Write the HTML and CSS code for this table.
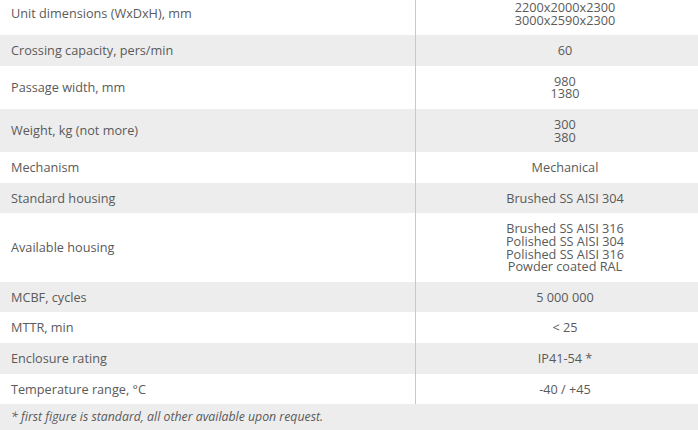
FILE: index.html
```html
<!DOCTYPE html>
<html>
<head>
<meta charset="utf-8">
<link rel="stylesheet" href="styles.css">
</head>
<body>
<div class="specs">
  <table class="spec-table">
    <tr><td class="name">Unit dimensions (WxDxH), mm</td><td class="val">2200x2000x2300<br>3000x2590x2300</td></tr>
    <tr class="alt"><td class="name">Crossing capacity, pers/min</td><td class="val">60</td></tr>
    <tr><td class="name">Passage width, mm</td><td class="val">980<br>1380</td></tr>
    <tr class="alt"><td class="name">Weight, kg (not more)</td><td class="val">300<br>380</td></tr>
    <tr><td class="name">Mechanism</td><td class="val">Mechanical</td></tr>
    <tr class="alt"><td class="name">Standard housing</td><td class="val">Brushed SS AISI 304</td></tr>
    <tr><td class="name">Available housing</td><td class="val">Brushed SS AISI 316<br>Polished SS AISI 304<br>Polished SS AISI 316<br>Powder coated RAL</td></tr>
    <tr class="alt"><td class="name">MCBF, cycles</td><td class="val">5 000 000</td></tr>
    <tr><td class="name">MTTR, min</td><td class="val">&lt; 25</td></tr>
    <tr class="alt"><td class="name">Enclosure rating</td><td class="val">IP41-54 *</td></tr>
    <tr><td class="name">Temperature range, °C</td><td class="val">-40 / +45</td></tr>
  </table>
  <div class="note">* first figure is standard, all other available upon request.</div>
</div>
</body>
</html>
```
FILE: styles.css
```css
html, body {
  margin: 0;
  padding: 0;
  background: #fff;
}
.specs {
  width: 698px;
  margin-top: -8px;
  font-family: "Open Sans", "Liberation Sans", sans-serif;
  font-size: 12.7px;
  color: #5a5a5a;
}
.spec-table {
  width: 100%;
  border-collapse: collapse;
}
.spec-table td {
  padding: 9px 0 9px 0;
  line-height: 12.6px;
  vertical-align: middle;
}
.spec-table tr.alt td {
  background: #ededed;
}
.spec-table td.name {
  width: 404px;
  padding-left: 11px;
  border-right: 1px solid #c8c8c8;
}
.spec-table td.val {
  text-align: center;
  padding-left: 16px;
}
.note {
  background: #ededed;
  height: 26px;
  line-height: 26px;
  padding-left: 11px;
  font-style: italic;
  font-size: 12.3px;
}
```
